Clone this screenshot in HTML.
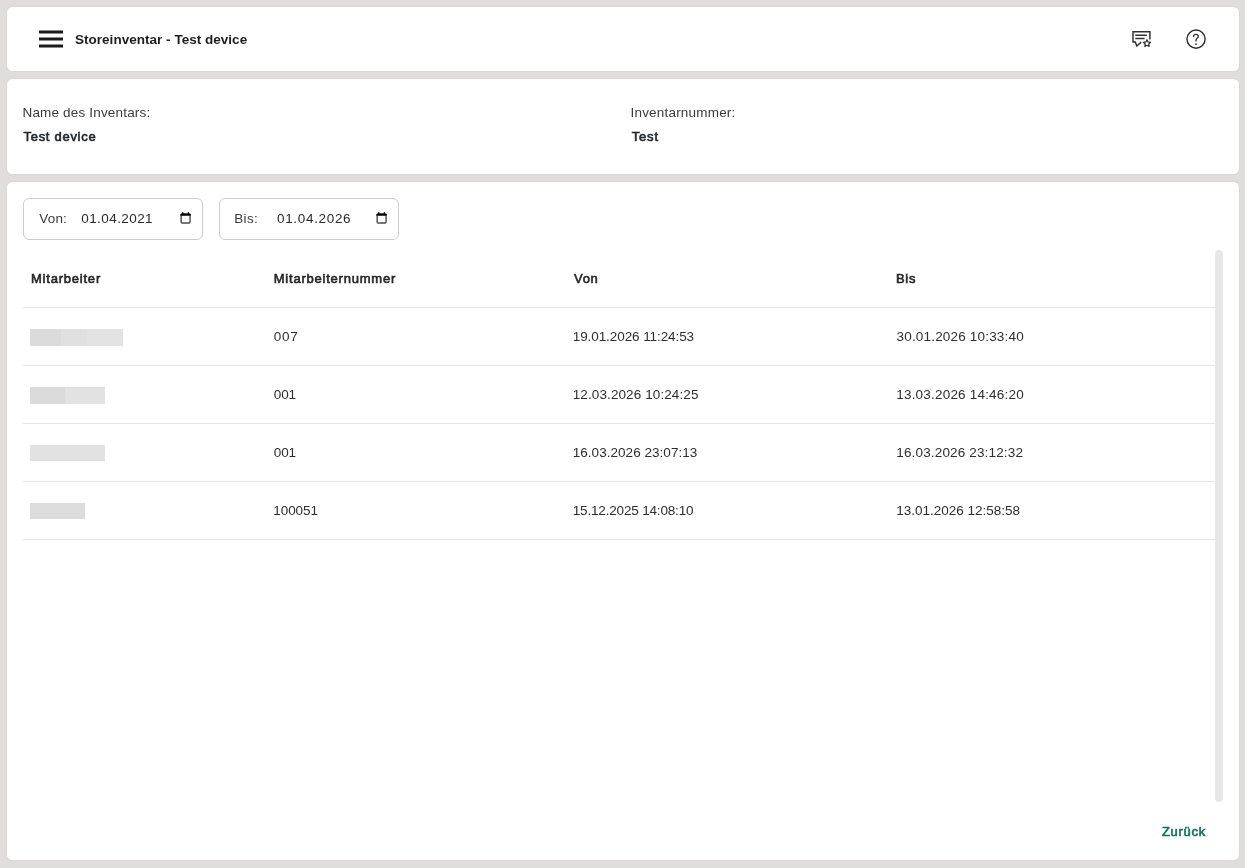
<!DOCTYPE html>
<html lang="de"><head><meta charset="utf-8"><title>Storeinventar - Test device</title>
<style>
*{box-sizing:border-box;margin:0;padding:0}
html,body{width:1245px;height:868px;overflow:hidden}
body{background:#e0dddc;font-family:"Liberation Sans",sans-serif;position:relative}
.card{position:absolute;left:7px;width:1232px;background:#fff;border-radius:5.5px;box-shadow:0 0 2px rgba(60,40,30,.10)}
#c1{top:7px;height:64px}
#c2{top:79px;height:95px}
#c3{top:182px;height:678px}
.t{position:absolute;white-space:pre;line-height:20px;height:20px;display:block}
.inp{position:absolute;top:198px;width:180px;height:42px;border:1px solid #cdcdcd;border-radius:6px;background:#fff}
.hl{position:absolute;left:23px;width:1192px;height:1px;background:#e6e6e6}
.blk{position:absolute;height:17px}
.sb{position:absolute;left:1215px;top:250px;width:8px;height:552px;border-radius:4px;background:#e8e8e8}
svg{position:absolute;overflow:visible}
#tx{position:absolute;left:0;top:0;width:1245px;height:868px;will-change:transform}
</style></head><body>
<div class="card" id="c1"></div>
<div class="card" id="c2"></div>
<div class="card" id="c3"></div>

<!-- header icons -->
<svg id="menu" style="left:39px;top:30px" width="24" height="18" viewBox="0 0 24 18"><g fill="#1c1c1c"><rect x="0" y="0.5" width="24" height="3"/><rect x="0" y="7.5" width="24" height="3"/><rect x="0" y="14.5" width="24" height="3"/></g></svg>
<svg id="fb" style="left:1130px;top:28px" width="24" height="22" viewBox="1130 28 24 22" fill="none" stroke="#303030" stroke-width="1.45" stroke-linejoin="miter">
 <path d="M1149.9 39.6 V31.8 H1133 V42 H1135.3 L1136.8 46.0 L1141.2 42.1"/>
 <path d="M1135.3 35.3 H1146.8 M1135.3 38.5 H1144.6" stroke-width="1.4"/>
 <path d="M1147.00 39.70 L1148.09 41.95 L1150.57 42.29 L1148.76 44.02 L1149.20 46.48 L1147.00 45.30 L1144.80 46.48 L1145.24 44.02 L1143.43 42.29 L1145.91 41.95 Z" stroke-width="1.2" stroke-linejoin="round"/>
</svg>
<svg id="help" style="left:1184px;top:27px" width="24" height="24" viewBox="1184 27 24 24" fill="none" stroke="#2b2b2b" stroke-width="1.4" stroke-linecap="round">
 <circle cx="1196.05" cy="39.1" r="9.1"/>
 <path d="M1193.6 36.4 C1193.7 35 1194.7 34.3 1196 34.3 C1197.4 34.3 1198.3 35.2 1198.3 36.3 C1198.3 38.2 1196 38.3 1196 40.2 V41.1" stroke-width="1.3"/>
 <circle cx="1196" cy="44.15" r="0.85" fill="#2b2b2b" stroke="none"/>
</svg>

<!-- date inputs -->
<div class="inp" style="left:23px"></div>
<div class="inp" style="left:219px"></div>
<svg class="cal" style="left:179px;top:210px" width="14" height="16" viewBox="179 210 14 16"><g>
 <rect x="181.15" y="214.2" width="8.9" height="8.8" rx="0.9" fill="none" stroke="#4a4a4a" stroke-width="1.4"/>
 <path d="M180.45 215.8 V214.6 Q180.45 213.6 181.45 213.6 H182.1 L182.45 211.9 H183.15 L183.5 213.6 H187.6 L187.95 211.9 H188.65 L189 213.6 H189.75 Q190.75 213.6 190.75 214.6 V215.8 Z" fill="#000"/>
</g></svg>
<svg class="cal" style="left:375px;top:210px" width="14" height="16" viewBox="179 210 14 16"><g>
 <rect x="181.15" y="214.2" width="8.9" height="8.8" rx="0.9" fill="none" stroke="#4a4a4a" stroke-width="1.4"/>
 <path d="M180.45 215.8 V214.6 Q180.45 213.6 181.45 213.6 H182.1 L182.45 211.9 H183.15 L183.5 213.6 H187.6 L187.95 211.9 H188.65 L189 213.6 H189.75 Q190.75 213.6 190.75 214.6 V215.8 Z" fill="#000"/>
</g></svg>

<!-- table lines -->
<div class="hl" style="top:307px"></div>
<div class="hl" style="top:365px"></div>
<div class="hl" style="top:423px"></div>
<div class="hl" style="top:481px"></div>
<div class="hl" style="top:539px"></div>

<!-- redacted name blocks -->
<div class="blk" style="left:30px;top:329px;width:93px;background:linear-gradient(90deg,#dbdbdb 0,#dbdbdb 31px,#e0e0e0 31px,#e0e0e0 57px,#e3e3e3 57px)"></div>
<div class="blk" style="left:30px;top:387px;width:75px;background:linear-gradient(90deg,#dbdbdb 0,#dbdbdb 35px,#e2e2e2 35px)"></div>
<div class="blk" style="left:30px;top:445px;width:75px;height:16px;background:#e2e2e2"></div>
<div class="blk" style="left:30px;top:503px;width:55px;height:16px;background:#dcdcdc"></div>

<div class="sb"></div>

<!-- text -->
<div id="tx">
<span class="t" style="left:75.00px;top:30px;font-weight:700;color:#1e1e1e;font-size:13.5px;letter-spacing:0.023px">Storeinventar - Test device</span>
<span class="t" style="left:22.50px;top:103px;font-weight:400;color:#3a3a3a;font-size:13.5px;letter-spacing:0.172px">Name des Inventars:</span>
<span class="t" style="left:23.50px;top:127px;font-weight:400;color:#23272b;-webkit-text-stroke:0.6px #23272b;font-size:13px;letter-spacing:0.710px">Test device</span>
<span class="t" style="left:630.50px;top:103px;font-weight:400;color:#3a3a3a;font-size:13.5px;letter-spacing:0.196px">Inventarnummer:</span>
<span class="t" style="left:631.75px;top:127px;font-weight:400;color:#23272b;-webkit-text-stroke:0.6px #23272b;font-size:13px;letter-spacing:0.800px">Test</span>
<span class="t" style="left:39.25px;top:209px;font-weight:400;color:#3a3a3a;font-size:13.5px;letter-spacing:0.183px">Von:</span>
<span class="t" style="left:81.25px;top:209px;font-weight:400;color:#2a2a2a;font-size:13.5px;letter-spacing:0.422px">01.04.2021</span>
<span class="t" style="left:234.25px;top:209px;font-weight:400;color:#3a3a3a;font-size:13.5px;letter-spacing:0.350px">Bis:</span>
<span class="t" style="left:277.00px;top:209px;font-weight:400;color:#2a2a2a;font-size:13.5px;letter-spacing:0.672px">01.04.2026</span>
<span class="t" style="left:31.00px;top:269px;font-weight:400;color:#252525;-webkit-text-stroke:0.6px #252525;font-size:13px;letter-spacing:0.780px">Mitarbeiter</span>
<span class="t" style="left:273.75px;top:269px;font-weight:400;color:#252525;-webkit-text-stroke:0.6px #252525;font-size:13px;letter-spacing:0.778px">Mitarbeiternummer</span>
<span class="t" style="left:574.00px;top:269px;font-weight:400;color:#252525;-webkit-text-stroke:0.6px #252525;font-size:13px;letter-spacing:0.700px">Von</span>
<span class="t" style="left:896.00px;top:269px;font-weight:400;color:#252525;-webkit-text-stroke:0.6px #252525;font-size:13px;letter-spacing:0.700px">Bis</span>
<span class="t" style="left:273.75px;top:327px;font-weight:400;color:#2e2e2e;font-size:13.5px;letter-spacing:0.750px">007</span>
<span class="t" style="left:572.75px;top:327px;font-weight:400;color:#2e2e2e;font-size:13.5px;letter-spacing:-0.083px">19.01.2026 11:24:53</span>
<span class="t" style="left:896.50px;top:327px;font-weight:400;color:#2e2e2e;font-size:13.5px;letter-spacing:0.183px">30.01.2026 10:33:40</span>
<span class="t" style="left:273.75px;top:385px;font-weight:400;color:#2e2e2e;font-size:13.5px;letter-spacing:-0.100px">001</span>
<span class="t" style="left:572.75px;top:385px;font-weight:400;color:#2e2e2e;font-size:13.5px;letter-spacing:0.100px">12.03.2026 10:24:25</span>
<span class="t" style="left:896.25px;top:385px;font-weight:400;color:#2e2e2e;font-size:13.5px;letter-spacing:0.197px">13.03.2026 14:46:20</span>
<span class="t" style="left:273.75px;top:443px;font-weight:400;color:#2e2e2e;font-size:13.5px;letter-spacing:-0.100px">001</span>
<span class="t" style="left:572.75px;top:443px;font-weight:400;color:#2e2e2e;font-size:13.5px;letter-spacing:0.036px">16.03.2026 23:07:13</span>
<span class="t" style="left:896.25px;top:443px;font-weight:400;color:#2e2e2e;font-size:13.5px;letter-spacing:0.156px">16.03.2026 23:12:32</span>
<span class="t" style="left:273.25px;top:501px;font-weight:400;color:#2e2e2e;font-size:13.5px;letter-spacing:-0.060px">100051</span>
<span class="t" style="left:572.75px;top:501px;font-weight:400;color:#2e2e2e;font-size:13.5px;letter-spacing:-0.175px">15.12.2025 14:08:10</span>
<span class="t" style="left:896.25px;top:501px;font-weight:400;color:#2e2e2e;font-size:13.5px;letter-spacing:-0.008px">13.01.2026 12:58:58</span>
<span class="t" style="left:1162.00px;top:822px;font-weight:400;color:#14705f;-webkit-text-stroke:0.6px #14705f;font-size:13px;letter-spacing:0.680px">Zurück</span>
</div>
</body></html>
